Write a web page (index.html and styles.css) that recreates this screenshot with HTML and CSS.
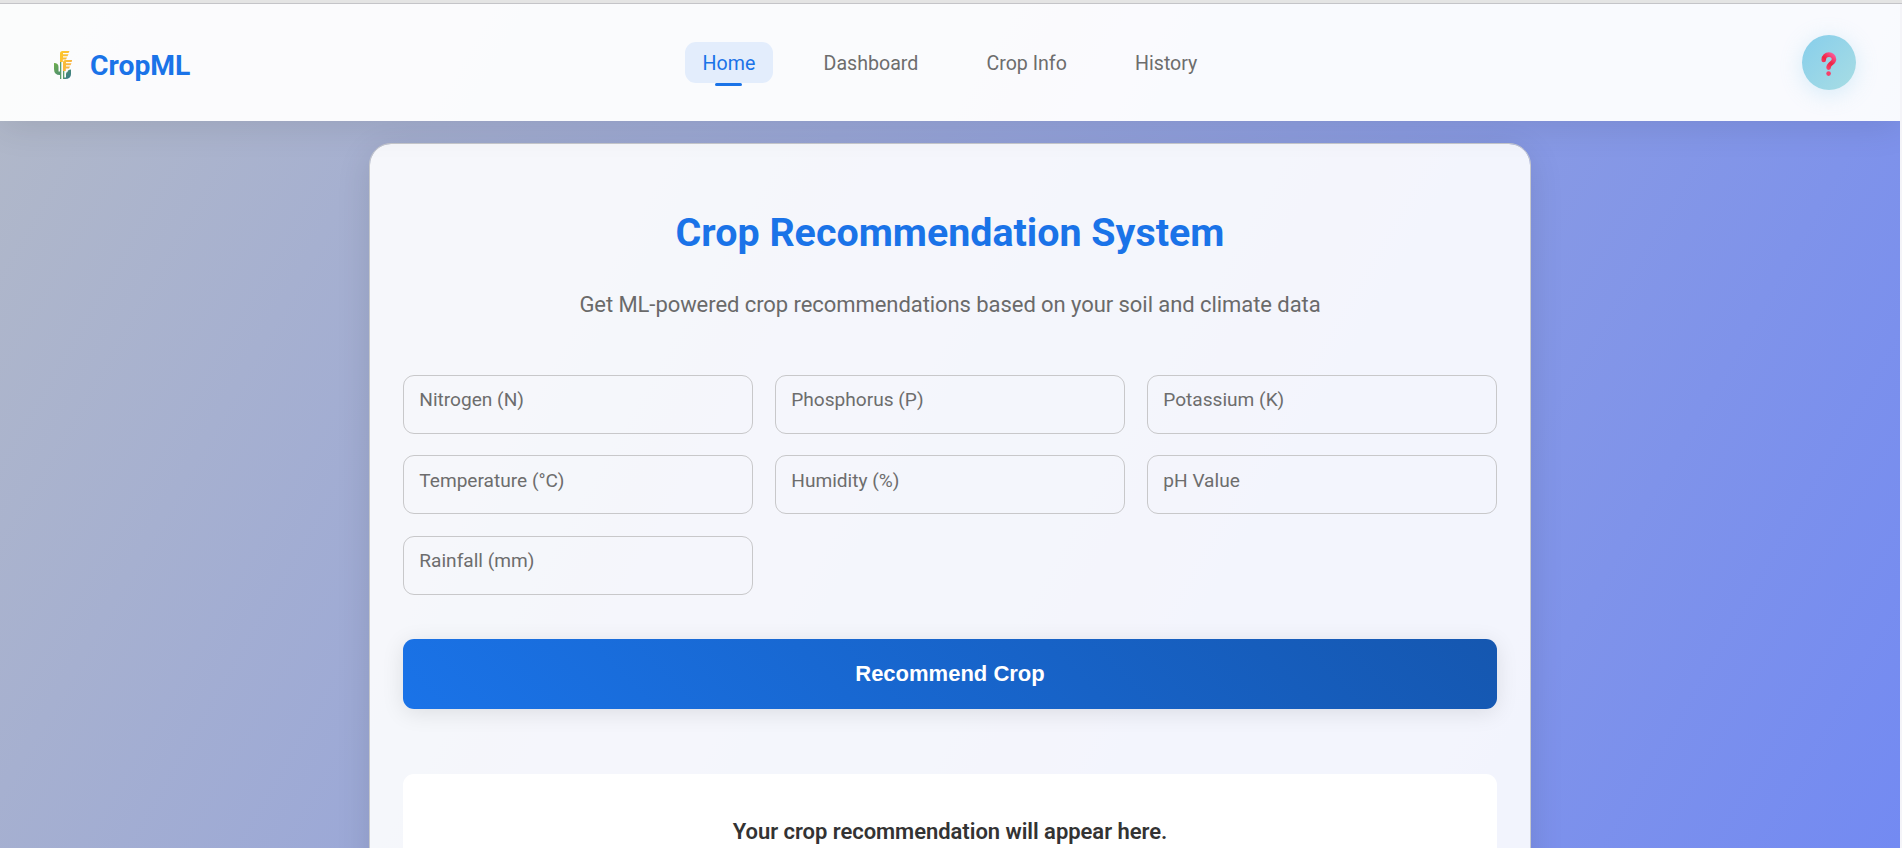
FILE: index.html
```html
<!DOCTYPE html>
<html lang="en">
<head>
<meta charset="utf-8">
<title>CropML</title>
<link rel="stylesheet" href="styles.css">
</head>
<body>
<div class="window-edge"></div>
<div class="page">
  <header class="header">
    <a class="logo">
      <svg class="logo-icon" width="18" height="28" viewBox="0 0 18 28">
        <defs>
          <linearGradient id="grain" x1="0" y1="0" x2="1" y2="1"><stop offset="0" stop-color="#ffc928"/><stop offset="1" stop-color="#f5ad4c"/></linearGradient>
          <linearGradient id="leaf" x1="0" y1="0" x2="1" y2="1"><stop offset="0" stop-color="#6fae4c"/><stop offset="1" stop-color="#35788c"/></linearGradient>
        </defs>
        <path d="M0 12q4.500 0 4.500 4v4.500H6V24Q0 24 0 18zM17 18.500V23q0 5-6 5h-1.500v-1.500H12V23q0-2 1.500-2 0-2.500 3.500-2.500z" fill="url(#leaf)"/>
        <path d="M6 10h1.300v18H6zM9 19h1.300v9H9z" fill="#5a9c68"/>
        <path d="M8.500 0H15.500l-1 2H9v1.200h5.500l-1 2H9v1.200h4l-1 2H8.800V11H6V2.500Q6 0 8.500 0zM11.500 9H18.500l-1 2H12v1.200h5.500l-1 2H12v1.200h4l-1 2H11.800V20H9v-8.500Q9 9 11.500 9z" fill="url(#grain)"/>
      </svg>
      <span>CropML</span>
    </a>
    <nav class="nav">
      <a class="nav-link active">Home</a>
      <a class="nav-link">Dashboard</a>
      <a class="nav-link">Crop Info</a>
      <a class="nav-link">History</a>
    </nav>
    <button class="help" aria-label="Help">
      <svg width="16" height="24" viewBox="0 0 16 24">
        <defs><linearGradient id="mark" x1="1" y1="0" x2="0.300" y2="1"><stop offset="0" stop-color="#fb5a9a"/><stop offset="0.600" stop-color="#ee2442"/><stop offset="1" stop-color="#f5406a"/></linearGradient></defs>
        <path d="M2.700 7.900C2.700 1 13 1 13 7.200c0 4.300-5.400 3.800-5.400 8.400" fill="none" stroke="url(#mark)" stroke-width="4.600" stroke-linecap="round"/>
        <circle cx="7.600" cy="21.600" r="2.300" fill="#f5406a"/>
      </svg>
    </button>
  </header>
  <main class="card">
    <h1 class="title">Crop Recommendation System</h1>
    <p class="subtitle">Get ML-powered crop recommendations based on your soil and climate data</p>
    <form class="fields">
      <div class="field">Nitrogen (N)</div>
      <div class="field">Phosphorus (P)</div>
      <div class="field">Potassium (K)</div>
      <div class="field">Temperature (°C)</div>
      <div class="field">Humidity (%)</div>
      <div class="field">pH Value</div>
      <div class="field">Rainfall (mm)</div>
    </form>
    <button class="submit">Recommend Crop</button>
    <section class="result">Your crop recommendation will appear here.</section>
  </main>
</div>
</body>
</html>
```
FILE: styles.css
```css
* { box-sizing: border-box; }
body {
  margin: 0;
  height: 848px;
  overflow: hidden;
  background: #f4f4f8;
  font-family: Roboto, sans-serif;
  color: #333;
}
.window-edge {
  height: 4px;
  background: #e4e4e4;
  border-bottom: 1px solid #c4c4c8;
}
.page {
  width: 1900px;
  height: 844px;
  overflow: hidden;
  background: linear-gradient(120deg, #b2b9c8, #738af2);
}
.header {
  position: relative;
  display: grid;
  grid-template-columns: 1fr auto 1fr;
  align-items: center;
  height: 117px;
  padding: 0 44px;
  background: rgba(255, 255, 255, 0.95);
  box-shadow: 0 4px 35px rgba(0, 0, 0, 0.1);
}
.logo {
  display: flex;
  align-items: center;
  gap: 18px;
  padding: 5px 0 0 10px;
  font-size: 28.300px;
  font-weight: 700;
  color: #1a73e8;
}
.nav { display: flex; gap: 33px; }
.nav-link {
  position: relative;
  height: 41px;
  padding: 0 17.600px;
  border-radius: 11px;
  font-size: 19.600px;
  line-height: 43.500px;
  color: #6d6d6d;
}
.nav-link.active { background: #e3edfc; color: #1a73e8; }
.nav-link.active::after {
  content: "";
  position: absolute;
  left: 30px;
  right: 31px;
  bottom: -3px;
  height: 3px;
  border-radius: 2px;
  background: #1a73e8;
}
.help {
  display: flex;
  align-items: center;
  justify-content: center;
  justify-self: end;
  width: 54px;
  height: 55px;
  padding: 3px 0 0;
  border: 0;
  border-radius: 50%;
  background: linear-gradient(135deg, #87ceeb, #a8dde4);
  box-shadow: 0 4px 22px rgba(135, 206, 235, 0.3);
}
.card {
  width: 1162px;
  height: 900px;
  margin: 22px auto 0;
  padding: 66px 33px 0;
  border: 1px solid #c6c8cc;
  border-radius: 22px;
  background: rgba(255, 255, 255, 0.9);
  background-clip: padding-box;
  box-shadow: 0 8px 35px rgba(0, 0, 0, 0.11);
  text-align: center;
}
.title {
  margin: 0;
  font-size: 39.400px;
  line-height: 46px;
  color: #1a73e8;
}
.subtitle {
  margin: 32px 0 0;
  font-size: 22px;
  line-height: 34px;
  letter-spacing: -0.065px;
  color: #6a6a6a;
}
.fields {
  display: grid;
  grid-template-columns: repeat(3, 1fr);
  gap: 21.400px 22px;
  margin-top: 53px;
}
.field {
  height: 59px;
  padding: 13.300px 15.300px;
  border: 1px solid #c8c8ca;
  border-radius: 11px;
  font-size: 19.100px;
  line-height: 22px;
  text-align: left;
  color: #6d6d6d;
}
.submit {
  display: block;
  width: 100%;
  height: 70px;
  margin-top: 44.200px;
  border: 0;
  border-radius: 11px;
  background: linear-gradient(45deg, #1a73e8, #1557b0);
  box-shadow: 0 4px 22px rgba(0, 0, 0, 0.1);
  font: 700 22px/68px "Liberation Sans", sans-serif;
  color: #fff;
}
.result {
  height: 150px;
  margin-top: 65px;
  padding-top: 41px;
  border-radius: 11px;
  background: #fff;
  font-size: 22px;
  font-weight: 600;
  line-height: 34px;
  letter-spacing: -0.040px;
}
```
